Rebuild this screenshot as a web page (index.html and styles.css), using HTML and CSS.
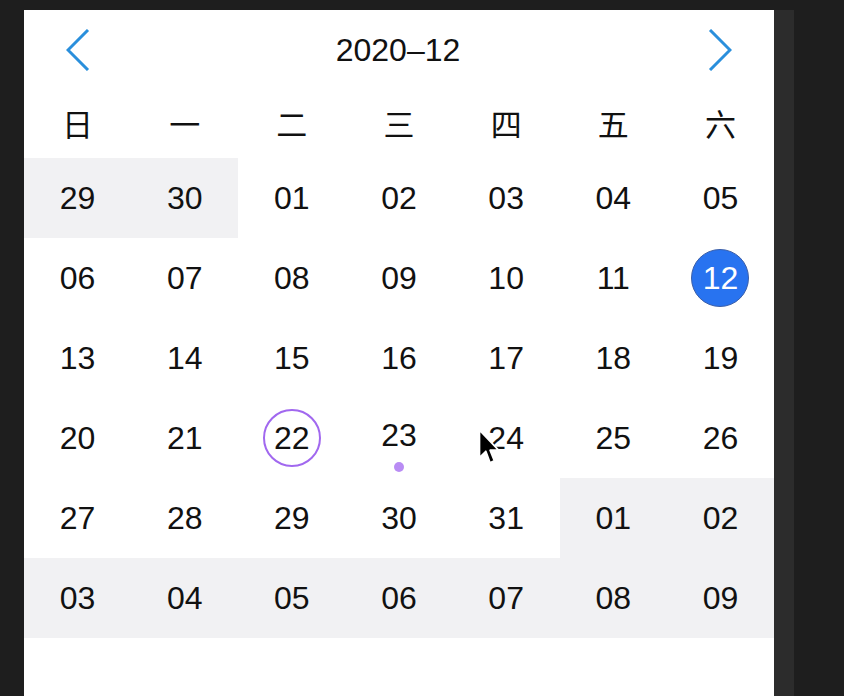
FILE: index.html
```html
<!DOCTYPE html>
<html lang="zh-CN">
<head>
    <meta charset="UTF-8">
    <meta name="viewport" content="width=device-width, initial-scale=1.0">
    <title>日历</title>
    <link rel="stylesheet" href="styles.css">
</head>
<body>

<div class="calendar">
    <div class="cal-header">
        <button class="arrow" type="button" aria-label="上个月">
            <svg width="24" height="42" viewBox="0 0 24 42"><polyline points="22,1 2,21 22,41" fill="none" stroke="#2a8fdc" stroke-width="3"/></svg>
        </button>
        <span class="title">2020–12</span>
        <button class="arrow" type="button" aria-label="下个月">
            <svg width="24" height="42" viewBox="0 0 24 42"><polyline points="2,1 22,21 2,41" fill="none" stroke="#2a8fdc" stroke-width="3"/></svg>
        </button>
    </div>

    <div class="weekdays">
        <span>日</span><span>一</span><span>二</span><span>三</span><span>四</span><span>五</span><span>六</span>
    </div>

    <div class="days">
        <div class="day other"><span class="num">29</span></div>
        <div class="day other"><span class="num">30</span></div>
        <div class="day"><span class="num">01</span></div>
        <div class="day"><span class="num">02</span></div>
        <div class="day"><span class="num">03</span></div>
        <div class="day"><span class="num">04</span></div>
        <div class="day"><span class="num">05</span></div>

        <div class="day"><span class="num">06</span></div>
        <div class="day"><span class="num">07</span></div>
        <div class="day"><span class="num">08</span></div>
        <div class="day"><span class="num">09</span></div>
        <div class="day"><span class="num">10</span></div>
        <div class="day"><span class="num">11</span></div>
        <div class="day"><span class="num selected">12</span></div>

        <div class="day"><span class="num">13</span></div>
        <div class="day"><span class="num">14</span></div>
        <div class="day"><span class="num">15</span></div>
        <div class="day"><span class="num">16</span></div>
        <div class="day"><span class="num">17</span></div>
        <div class="day"><span class="num">18</span></div>
        <div class="day"><span class="num">19</span></div>

        <div class="day"><span class="num">20</span></div>
        <div class="day"><span class="num">21</span></div>
        <div class="day"><span class="num today">22</span></div>
        <div class="day marked"><span class="num">23</span><i class="dot"></i></div>
        <div class="day"><span class="num">24</span></div>
        <div class="day"><span class="num">25</span></div>
        <div class="day"><span class="num">26</span></div>

        <div class="day"><span class="num">27</span></div>
        <div class="day"><span class="num">28</span></div>
        <div class="day"><span class="num">29</span></div>
        <div class="day"><span class="num">30</span></div>
        <div class="day"><span class="num">31</span></div>
        <div class="day other"><span class="num">01</span></div>
        <div class="day other"><span class="num">02</span></div>

        <div class="day other"><span class="num">03</span></div>
        <div class="day other"><span class="num">04</span></div>
        <div class="day other"><span class="num">05</span></div>
        <div class="day other"><span class="num">06</span></div>
        <div class="day other"><span class="num">07</span></div>
        <div class="day other"><span class="num">08</span></div>
        <div class="day other"><span class="num">09</span></div>
    </div>

    <!-- mouse pointer captured in the screenshot -->
    <svg class="cursor" width="24" height="38" viewBox="0 0 22 36">
        <path d="M2 2 L2 28 L8 22 L12 33 L16 31 L12 21 L20 21 Z" fill="#000" stroke="#fff" stroke-width="1.6" stroke-linejoin="round"/>
    </svg>
</div>

</body>
</html>
```

FILE: styles.css
```css
body {
    margin: 0;
    height: 696px;
    overflow: hidden;
    background: #1e1e1e;
    font-family: "Liberation Sans", "Noto Sans CJK SC", sans-serif;
    color: #111;
}

.calendar {
    position: relative;
    width: 750px;
    height: 686px;
    margin: 10px 0 0 24px;
    background: #fff;
    box-shadow: 20px 0 0 #2c2c2c;
}

.cal-header {
    display: flex;
    align-items: center;
    justify-content: space-between;
    height: 80px;
    padding: 0 42px;
}

.arrow {
    display: flex;
    padding: 0;
    border: 0;
    background: none;
    cursor: pointer;
}

.title {
    font-size: 32px;
    line-height: 32px;
    padding-right: 2px;
}

.weekdays {
    display: grid;
    grid-template-columns: repeat(7, 1fr);
    height: 68px;
    align-items: center;
    text-align: center;
    font-size: 31px;
    padding-bottom: 4px;
    box-sizing: border-box;
}

.days {
    display: grid;
    grid-template-columns: repeat(7, 1fr);
    grid-auto-rows: 80px;
}

.day {
    position: relative;
    display: flex;
    align-items: center;
    justify-content: center;
}

.day.other {
    background: #f1f1f3;
}

.num {
    display: flex;
    align-items: center;
    justify-content: center;
    font-size: 32px;
    line-height: 32px;
}

.num.selected,
.num.today {
    width: 58px;
    height: 58px;
    border-radius: 50%;
    box-sizing: border-box;
}

.num.selected {
    background: #2873f0;
    border: 1px solid #3c5fa8;
    color: #fff;
}

.num.today {
    border: 2px solid #a168ef;
}

.day.marked .num {
    margin-bottom: 7px;
}

.dot {
    position: absolute;
    left: 50%;
    bottom: 6px;
    width: 10px;
    height: 10px;
    margin-left: -5px;
    border-radius: 50%;
    background: #b98cf4;
}

.cursor {
    position: absolute;
    left: 453px;
    top: 418px;
}
```
